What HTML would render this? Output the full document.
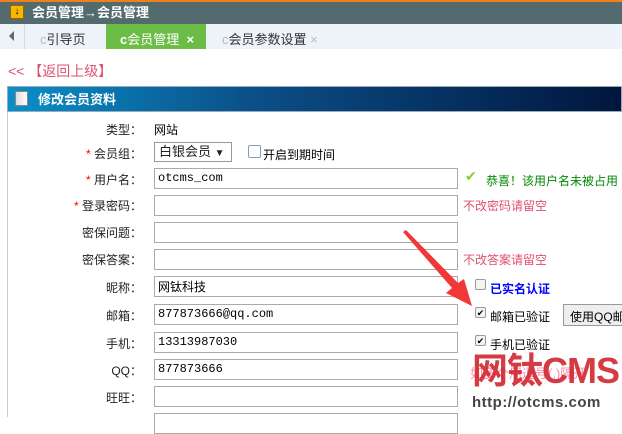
<!DOCTYPE html><html><head><meta charset="utf-8"><style>
*{margin:0;padding:0;box-sizing:border-box}
body{width:622px;height:417px;overflow:hidden;background:#fff;font:12px "Liberation Sans","Noto Sans CJK SC",sans-serif;position:relative}
.a{position:absolute;white-space:nowrap}
.top{left:0;top:0;width:622px;height:24px;background:#536a6e;border-top:2px solid #f08018}
.tabs{left:0;top:24px;width:622px;height:25px;background:#eef3f9}
.lbl{position:absolute;left:0;width:142px;text-align:right;font-size:12px;color:#222;white-space:nowrap}
.in{position:absolute;left:154px;width:304px;height:21px;border:1px solid #aaa;font:12px "Liberation Mono",monospace;padding:2px 3px;line-height:15px;color:#000;white-space:nowrap}
.r{color:#e05070;font-size:12px}
.cb{position:absolute;width:11px;height:11px;border:1px solid #999;border-radius:2px;font-size:9px;line-height:10px;text-align:center;background:#f4f4f4}
</style></head><body>
<div class="a top"></div>
<div class="a" style="left:10px;top:5px;width:14px;height:14px;background:#f5b800;border:1px solid #a06000;font-size:10px;line-height:12px;text-align:center;color:#000">↓</div>
<div class="a" style="left:32px;top:5px;color:#fff;font-weight:bold;font-size:13px;line-height:15px">会员管理→会员管理</div>
<div class="a tabs"></div>
<div class="a" style="left:9px;top:31px;width:0;height:0;border:5px solid transparent;border-right:5px solid #666;border-left:0"></div>
<div class="a" style="left:24px;top:24px;width:1px;height:25px;background:#d0d8e0"></div>
<div class="a" style="left:40px;top:29px;font-size:13px;color:#333"><span style="color:#bbb">c</span>引导页</div>
<div class="a" style="left:106px;top:24px;width:100px;height:25px;background:#6cbd45"></div>
<div class="a" style="left:120px;top:29px;font-size:13px;color:#fff"><b>c</b>会员管理 &nbsp;<b>×</b></div>
<div class="a" style="left:222px;top:29px;font-size:13px;color:#333"><span style="color:#bbb">c</span>会员参数设置 <span style="color:#bbb">×</span></div>
<div class="a" style="left:8px;top:61px;font-size:14px;color:#e05070">&lt;&lt; 【返回上级】</div>
<div class="a" style="left:7px;top:86px;width:615px;height:26px;background:linear-gradient(90deg,#0a8fc8,#0b4f88 40%,#01163e);border:1px solid #9ab"></div>
<div class="a" style="left:15px;top:91px;width:13px;height:15px;background:linear-gradient(90deg,#ddd,#fff);border:1px solid #888"></div>
<div class="a" style="left:38px;top:92px;color:#fff;font-weight:bold;font-size:13px;line-height:15px">修改会员资料</div>
<div class="a" style="left:7px;top:112px;width:1px;height:305px;background:#ccc"></div>
<div class="lbl" style="top:121px">类型：</div><div class="a" style="left:154px;top:121px">网站</div>
<div class="lbl" style="top:145px"><span style="color:red">*</span> 会员组：</div>
<div class="a" style="left:154px;top:142px;width:78px;height:20px;border:1px solid #999;padding:1px 4px;font-size:13px;line-height:16px;color:#222">白银会员 <span style="font-size:10px">▼</span></div>
<div class="a" style="left:248px;top:145px;width:13px;height:13px;border:1px solid #89b;border-radius:2px"></div>
<div class="a" style="left:263px;top:146px">开启到期时间</div>
<div class="lbl" style="top:171px"><span style="color:red">*</span> 用户名：</div><div class="in" style="top:168px">otcms_com</div>
<div class="a" style="left:465px;top:168px;color:#8c3;font-size:14px">✔</div><div class="a" style="left:486px;top:172px;color:#080">恭喜！该用户名未被占用</div>
<div class="lbl" style="top:197px"><span style="color:red">*</span> 登录密码：</div><div class="in" style="top:195px"></div><div class="a r" style="left:463px;top:197px">不改密码请留空</div>
<div class="lbl" style="top:224px">密保问题：</div><div class="in" style="top:222px"></div>
<div class="lbl" style="top:251px">密保答案：</div><div class="in" style="top:249px"></div><div class="a r" style="left:463px;top:251px">不改答案请留空</div>
<div class="lbl" style="top:279px">昵称：</div><div class="in" style="top:276px;font-family:'Noto Sans CJK SC'">网钛科技</div>
<div class="cb" style="left:475px;top:279px"></div><div class="a" style="left:490px;top:280px;color:#00f;font-weight:bold">已实名认证</div>
<div class="lbl" style="top:307px">邮箱：</div><div class="in" style="top:304px">877873666@qq.com</div>
<div class="cb" style="left:475px;top:307px">✔</div><div class="a" style="left:490px;top:308px">邮箱已验证</div>
<div class="a" style="left:563px;top:304px;width:70px;height:22px;border:1px solid #999;background:#eee;padding:3px 6px;overflow:hidden">使用QQ邮箱</div>
<div class="lbl" style="top:335px">手机：</div><div class="in" style="top:332px">13313987030</div>
<div class="cb" style="left:475px;top:335px">✔</div><div class="a" style="left:490px;top:336px">手机已验证</div>
<div class="lbl" style="top:362px">QQ：</div><div class="in" style="top:359px">877873666</div>
<div class="lbl" style="top:389px">旺旺：</div><div class="in" style="top:386px"></div>
<div class="in" style="top:413px"></div>
<div class="a" style="left:470px;top:363px;color:#f8a;font-size:13px">如多个用逗号(,)隔开</div>
<div class="a" style="left:472px;top:351px;color:#d0262e;font-size:36px;font-weight:bold;line-height:40px;letter-spacing:-1px;opacity:.9">网钛CMS</div>
<div class="a" style="left:472px;top:394px;color:#444;font:bold 15px 'Liberation Sans',sans-serif;letter-spacing:0.5px">http://otcms.com</div>
<svg class="a" style="left:400px;top:228px" width="75" height="82"><polygon points="3,4 52,60 46,65 72,78 64,51 58,55 6,2" fill="#f03838"/></svg>
</body></html>
